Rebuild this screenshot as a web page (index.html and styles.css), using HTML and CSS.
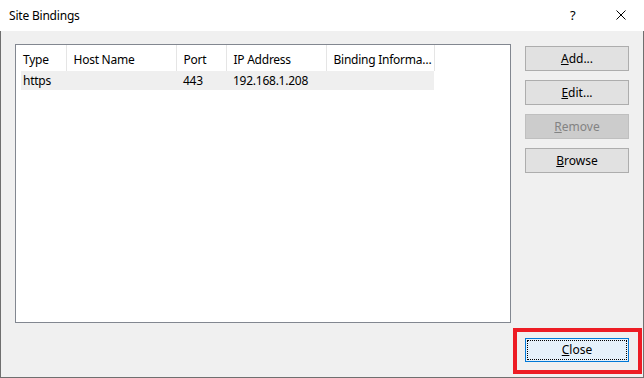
FILE: index.html
```html
<!DOCTYPE html>
<html lang="en">
<head>
  <meta charset="UTF-8"/>
  <title>Site Bindings</title>
  <link rel="stylesheet" href="styles.css">
</head>
<body>
  <div class="window">
    <!-- TITLE BAR -->
    <div class="title-bar">
      <span class="title">Site Bindings</span>
      <span class="help">?</span>
      <span class="close-x">
        <svg width="10" height="10" viewBox="0 0 10 10">
          <path d="M0.5 0.5 L9.5 9.5 M9.5 0.5 L0.5 9.5" stroke="#000" stroke-width="1" fill="none"/>
        </svg>
      </span>
    </div>

    <!-- CONTENT -->
    <div class="content">
      <div class="main-row">
        <div class="list-box">
          <table class="bindings">
            <thead>
              <tr>
                <th class="col-type">Type</th>
                <th class="col-host">Host Name</th>
                <th class="col-port">Port</th>
                <th class="col-ip">IP Address</th>
                <th class="col-info">Binding Informa…</th>
              </tr>
            </thead>
            <tbody>
              <tr class="selected">
                <td>https</td>
                <td></td>
                <td>443</td>
                <td>192.168.1.208</td>
                <td></td>
              </tr>
            </tbody>
          </table>
        </div>

        <div class="side-buttons">
          <div class="btn"><u>A</u>dd...</div>
          <div class="btn"><u>E</u>dit...</div>
          <div class="btn disabled"><u>R</u>emove</div>
          <div class="btn"><u>B</u>rowse</div>
        </div>
      </div>

      <div class="footer">
        <div class="highlight">
          <div class="btn focused"><u>C</u>lose</div>
        </div>
      </div>
    </div>
  </div>
</body>
</html>
```

FILE: styles.css
```css
/* 全体 */
body {
  margin: 0;
  padding: 0;
  background-color: #fff;
  font-family: "Noto Sans", "Open Sans", sans-serif;
  font-size: 12px;
  color: #000;
}

.window {
  width: 644px;
  height: 378px;
  box-sizing: border-box;
  display: flex;
  flex-direction: column;
}

/* TITLE BAR */
.title-bar {
  height: 31px;
  flex: none;
  background-color: #fff;
  display: flex;
  align-items: center;
  padding-left: 9px;
  box-sizing: border-box;
}

.title {
  flex: 1;
  margin-top: -1px;
  letter-spacing: -0.2px;
}

.help {
  width: 14px;
  margin-right: 32px;
  font-size: 13px;
  margin-top: -2px;
}

.close-x {
  width: 10px;
  height: 10px;
  margin-right: 18px;
  display: flex;
  margin-top: -1px;
}

/* CONTENT */
.content {
  flex: 1;
  background-color: #f0f0f0;
  border-left: 1px solid #6f6f6f;
  border-right: 1px solid #6f6f6f;
  border-bottom: 1px solid #6f6f6f;
  padding: 13px 0 0 14px;
  box-sizing: border-box;
  display: flex;
  flex-direction: column;
}

.main-row {
  display: flex;
}

.list-box {
  width: 496px;
  height: 279px;
  box-sizing: border-box;
  border: 1px solid #828790;
  background-color: #fff;
  padding-left: 5px;
}

table.bindings {
  border-collapse: collapse;
  table-layout: fixed;
  width: 413px;
  letter-spacing: -0.25px;
}

.bindings th {
  height: 26px;
  padding: 2px 0 0 7px;
  font-weight: normal;
  text-align: left;
  border-right: 1px solid #e5e5e5;
  white-space: nowrap;
  box-sizing: border-box;
}

.bindings td {
  height: 19px;
  padding: 0 0 0 7px;
  white-space: nowrap;
  box-sizing: border-box;
}

.bindings th:first-child,
.bindings td:first-child {
  padding-left: 2px;
}

.col-type { width: 45px; }
.col-host { width: 110px; }
.col-port { width: 50px; }
.col-ip { width: 100px; }
.col-info { width: 108px; }

.bindings tr.selected {
  background-color: #efefef;
}

/* BUTTONS */
.side-buttons {
  display: flex;
  flex-direction: column;
  gap: 9px;
  margin-left: 14px;
  padding-top: 2px;
}

.btn {
  width: 104px;
  height: 25px;
  box-sizing: border-box;
  border: 1px solid #adadad;
  background-color: #e1e1e1;
  display: flex;
  align-items: center;
  justify-content: center;
  padding-bottom: 1px;
}

.btn.disabled {
  background-color: #cccccc;
  border-color: #bfbfbf;
  color: #838383;
}

.btn.focused {
  height: 24px;
  background-color: #e5f1fb;
  border-color: #0078d7;
  outline: 1px dotted #000;
  outline-offset: -3px;
}

/* FOOTER */
.footer {
  display: flex;
  justify-content: flex-end;
  margin-top: 5px;
  margin-right: 1px;
}

.highlight {
  border: 4px solid #ed1c24;
  padding: 6px 9px 8px 8px;
}
```
